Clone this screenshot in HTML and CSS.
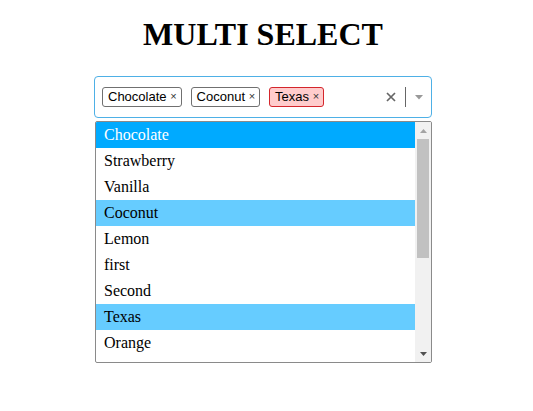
FILE: index.html
```html
<!DOCTYPE html>
<html>
<head>
<meta charset="utf-8">
<link rel="stylesheet" href="styles.css">
</head>
<body>
<div class="page">
  <h1 class="title">MULTI SELECT</h1>
  <div class="ms">
    <div class="control">
      <div class="tags">
        <span class="tag">Chocolate <span class="tx">×</span></span>
        <span class="tag">Coconut <span class="tx">×</span></span>
        <span class="tag tag-red">Texas <span class="tx">×</span></span>
      </div>
      <div class="indicators">
        <svg class="clear" width="10" height="10" viewBox="0 0 10 10"><path d="M1 1L9 9M9 1L1 9" stroke="#666" stroke-width="1.7"/></svg>
        <span class="sep"></span>
        <svg class="arrow" width="8" height="5" viewBox="0 0 8 5"><path d="M0 0H8L4 4.5Z" fill="#999"/></svg>
      </div>
    </div>
    <div class="menu">
      <ul class="list">
        <li class="opt active">Chocolate</li>
        <li class="opt">Strawberry</li>
        <li class="opt">Vanilla</li>
        <li class="opt sel">Coconut</li>
        <li class="opt">Lemon</li>
        <li class="opt">first</li>
        <li class="opt">Second</li>
        <li class="opt sel">Texas</li>
        <li class="opt">Orange</li>
      </ul>
      <div class="sb">
        <div class="sb-btn"><svg width="7" height="4" viewBox="0 0 7 4"><path d="M0 4H7L3.5 0Z" fill="#a3a3a3"/></svg></div>
        <div class="sb-track"><div class="sb-thumb"></div></div>
        <div class="sb-btn"><svg width="7" height="4" viewBox="0 0 7 4"><path d="M0 0H7L3.5 4Z" fill="#505050"/></svg></div>
      </div>
    </div>
  </div>
</div>
</body>
</html>
```
FILE: styles.css
```css
html, body { margin: 0; padding: 0; background: #fff; }
.page { width: 526px; display: flex; flex-direction: column; align-items: center; }
.title {
  font-family: "Liberation Serif", "Times New Roman", serif;
  font-size: 32px; font-weight: bold; margin: 16px 0 23px; line-height: 37px; color: #000;
}
.ms { width: 338px; }
.control {
  box-sizing: border-box; height: 42px; border: 1px solid #4eb0e6; border-radius: 4px;
  display: flex; align-items: center; padding: 0 6px 0 7px;
}
.tags { flex: 1; display: flex; gap: 9px; align-items: center; }
.tag {
  font-family: "Liberation Sans", Arial, sans-serif; font-size: 13px; color: #000;
  box-sizing: border-box; height: 20px; line-height: 18px; border: 1px solid #707070; border-radius: 3px;
  padding: 0 4px 0 5px; background: #fff; white-space: nowrap;
}
.tag .tx { font-size: 11px; color: #333; position: relative; top: -1px; }
.tag-red { background: #ffcccc; border-color: #d4262c; }
.indicators { display: flex; align-items: center; }
.clear { margin-right: 9px; }
.sep { width: 1px; height: 20px; background: #666; margin-right: 9px; }
.arrow { margin-right: 2px; }
.menu {
  margin-top: 3px; margin-left: 1px; box-sizing: border-box; height: 242px; border: 1px solid #8a8a8a;
  border-radius: 2px; display: flex; overflow: hidden;
}
.list { list-style: none; margin: 0; padding: 0; flex: 1; }
.opt {
  font-family: "Liberation Serif", "Times New Roman", serif; font-size: 16px; height: 26px;
  line-height: 26px; padding-left: 8px; color: #000;
}
.opt.active { background: #00aaff; color: #fff; }
.opt.sel { background: #66ccff; }
.sb { width: 16px; background: #f1f1f1; display: flex; flex-direction: column; }
.sb-btn { height: 17px; display: flex; align-items: center; justify-content: center; }
.sb-track { flex: 1; padding: 0 2px; }
.sb-thumb { height: 119px; background: #c1c1c1; }
```
